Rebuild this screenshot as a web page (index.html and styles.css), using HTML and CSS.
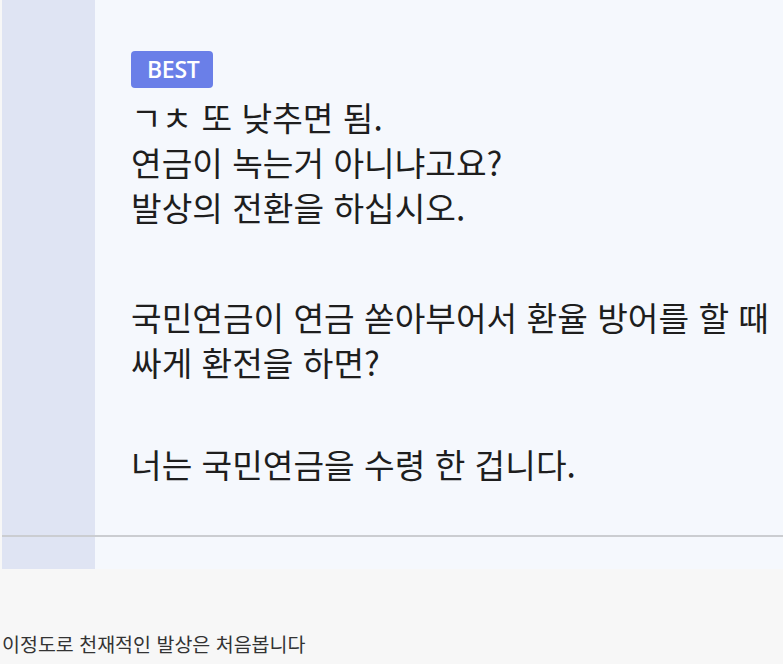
FILE: index.html
```html
<!DOCTYPE html>
<html lang="ko">
<head>
<meta charset="utf-8">
<link rel="stylesheet" href="styles.css">
</head>
<body>
<div class="page">
  <section class="panel">
    <div class="content">
      <span class="badge">BEST</span>
      <div class="body">
        <p class="para">ㄱㅊ 또 낮추면 됨.<br>연금이 녹는거 아니냐고요?<br>발상의 전환을 하십시오.</p>
        <p class="para p2">국민연금이 연금 쏟아부어서 환율 방어를 할 때 싸게 환전을 하면?</p>
        <p class="para p3">너는 국민연금을 수령 한 겁니다.</p>
      </div>
    </div>
    <div class="rule"></div>
    <div class="tail"></div>
  </section>
  <p class="comment">이정도로 천재적인 발상은 처음봅니다</p>
</div>
</body>
</html>
```

FILE: styles.css
```css
html, body {
  margin: 0;
  padding: 0;
  background: #f7f7f7;
}

.page {
  width: 783px;
  height: 664px;
  overflow: hidden;
  font-family: "Noto Sans CJK KR", "Noto Sans", sans-serif;
}

.panel {
  margin-left: 2px;
  background: linear-gradient(to right, #dfe4f3 0, #dfe4f3 93px, #f5f8fd 93px, #f5f8fd 100%);
}

.content {
  padding: 51px 0 49px 129px;
}

.badge {
  display: inline-block;
  height: 37px;
  line-height: 37px;
  padding: 0 14px 0 16px;
  background: #6a7fe8;
  color: #ffffff;
  border-radius: 4px;
  font-family: "Open Sans", "Noto Sans", sans-serif;
  font-weight: 600;
  font-size: 23px;
  letter-spacing: -0.3px;
  vertical-align: top;
}

.body {
  margin-top: 6px;
  color: #1e1e1e;
  font-size: 33.3px;
  line-height: 45px;
  width: 650px;
  word-break: keep-all;
}

.para {
  margin: 0;
}

.p2 {
  margin-top: 65px;
}

.p3 {
  margin-top: 57px;
}

.rule {
  height: 2px;
  background: #cbcdd1;
}

.tail {
  height: 32px;
}

.comment {
  margin: 63px 0 0 2px;
  font-size: 19.5px;
  line-height: 24px;
  color: #333333;
}
```
